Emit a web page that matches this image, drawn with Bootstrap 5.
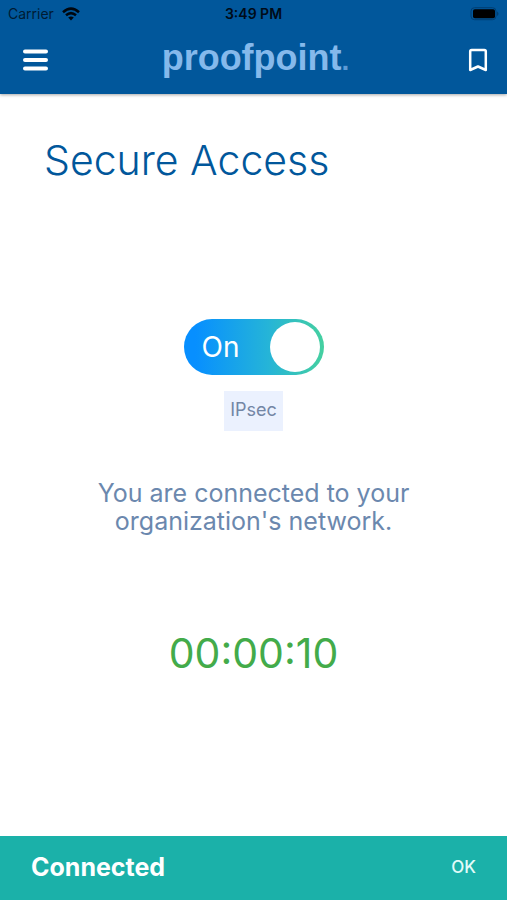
<!DOCTYPE html>
<html lang="en">
<head>
<meta charset="utf-8">
<meta name="viewport" content="width=device-width, initial-scale=1">
<title>Secure Access</title>
<link href="https://cdn.jsdelivr.net/npm/bootstrap@5.3.0/dist/css/bootstrap.min.css" rel="stylesheet">
<script src="https://cdn.jsdelivr.net/npm/bootstrap@5.3.0/dist/js/bootstrap.bundle.min.js" defer></script>
<style>
  body { font-family: Inter, "Liberation Sans", sans-serif; background: #fff; }
  .top-area { background: #01579b; box-shadow: 0 1px 3px rgba(0, 0, 0, .35); }
  .status-line { height: 28px; padding: 0 8px; font-size: 14px; line-height: 28px; color: #001b33; }
  .status-time { color: #000b18; font-weight: 600; }
  .app-bar { height: 66px; padding: 0 19px; }
  .brand { font-family: "Liberation Sans", sans-serif; font-size: 36px; line-height: 44px; font-weight: 700; color: #85b9eb; padding-bottom: 4px; }
  .brand-dot { font-size: 28px; color: #5d9bd6; }
  .page-title { padding: 0 44px; margin-top: 40px; font-size: 41px; line-height: 52px; font-weight: 300; color: #01579b; }
  .vpn-switch { width: 140px; height: 56px; margin-top: 133px; padding: 0 4px 0 18px; cursor: pointer;
    background: linear-gradient(90deg, #078fff 8%, #25b4d8 60%, #45d0a0); color: #fff; font-size: 28px; }
  .vpn-switch:focus-within { outline: 2px solid #01579b; outline-offset: 2px; }
  .knob { width: 50px; height: 50px; background: #fff; }
  .protocol { margin-top: 16px; height: 40px; padding: 0 6px; font-size: 18px; line-height: 38px; background: #ebf1fe; color: #7386a5; }
  .message { margin-top: 48px; max-width: 340px; font-size: 25px; line-height: 28px; color: #6b88ae; }
  .timer { margin-top: 90px; font-size: 41px; line-height: 56px; color: #43ab4a; }
  .snack { height: 64px; padding: 0 31px; background: #1bb1a9; color: #fff; font-size: 25px; font-weight: 700; }
  .snack .btn { font-size: 17px; font-weight: 500; color: #e2fcf9; }
</style>
</head>
<body class="d-flex flex-column min-vh-100">
  <header class="top-area">
    <div class="status-line row g-0">
      <div class="col d-flex align-items-center gap-2">
        <span>Carrier</span>
        <svg width="18" height="14" viewBox="0 0 18 14" fill="none" stroke="#00070f" stroke-width="2.5" aria-label="Wi-Fi" role="img">
          <path d="M1 5.2Q9-2 17 5.2M4 8.3Q9 4 14 8.3"/>
          <path d="M6.2 10.5Q9 8.3 11.8 10.5L9 13.5Z" fill="#00070f" stroke="none"/>
        </svg>
      </div>
      <div class="col text-center status-time">3:49 PM</div>
      <div class="col d-flex align-items-center justify-content-end">
        <svg width="29" height="14" viewBox="0 0 29 14" role="img" aria-label="Battery full">
          <rect x="1" y=".7" width="25" height="12" rx="3.5" fill="none" stroke="#013e72"/>
          <rect x="3" y="2.2" width="22" height="9" rx="1.8" fill="#000"/>
          <path d="M27 4.5q3 2.2 0 4.5z" fill="#013e72"/>
        </svg>
      </div>
    </div>
    <nav class="app-bar row g-0 align-items-center" aria-label="Main">
      <div class="col d-flex ps-1">
        <button type="button" class="btn p-0 border-0 d-flex" aria-label="Menu">
          <svg width="25" height="26" viewBox="0 0 25 26" stroke="#fff" stroke-width="4" stroke-linecap="round"><path d="M2 3.5H23M2 12H23M2 20.5H23"/></svg>
        </button>
      </div>
      <div class="col-auto brand">proofpoint<span class="brand-dot">.</span></div>
      <div class="col d-flex justify-content-end">
        <button type="button" class="btn p-0 border-0 d-flex" aria-label="Bookmark">
          <svg width="20" height="26" viewBox="0 0 20 26" fill="none" stroke="#fff" stroke-width="2.5" stroke-linejoin="round"><path d="M2.2 22V3.5Q2.2 2 3.7 2H16.3Q17.8 2 17.8 3.5V22L10 18.5Z"/></svg>
        </button>
      </div>
    </nav>
  </header>
  <main class="flex-grow-1 d-flex flex-column align-items-center">
    <h1 class="page-title w-100 mb-0">Secure Access</h1>
    <label class="vpn-switch rounded-pill d-flex align-items-center justify-content-between">
      <input type="checkbox" role="switch" class="visually-hidden" checked aria-label="Secure Access">
      <span>On</span>
      <span class="knob rounded-circle"></span>
    </label>
    <div class="protocol">IPsec</div>
    <p class="message text-center mb-0">You are connected to your organization's network.</p>
    <div class="timer" role="timer">00:00:10</div>
  </main>
  <footer class="snack d-flex align-items-center justify-content-between" role="status">
    <span>Connected</span>
    <button type="button" class="btn border-0 p-0">OK</button>
  </footer>
</body>
</html>
